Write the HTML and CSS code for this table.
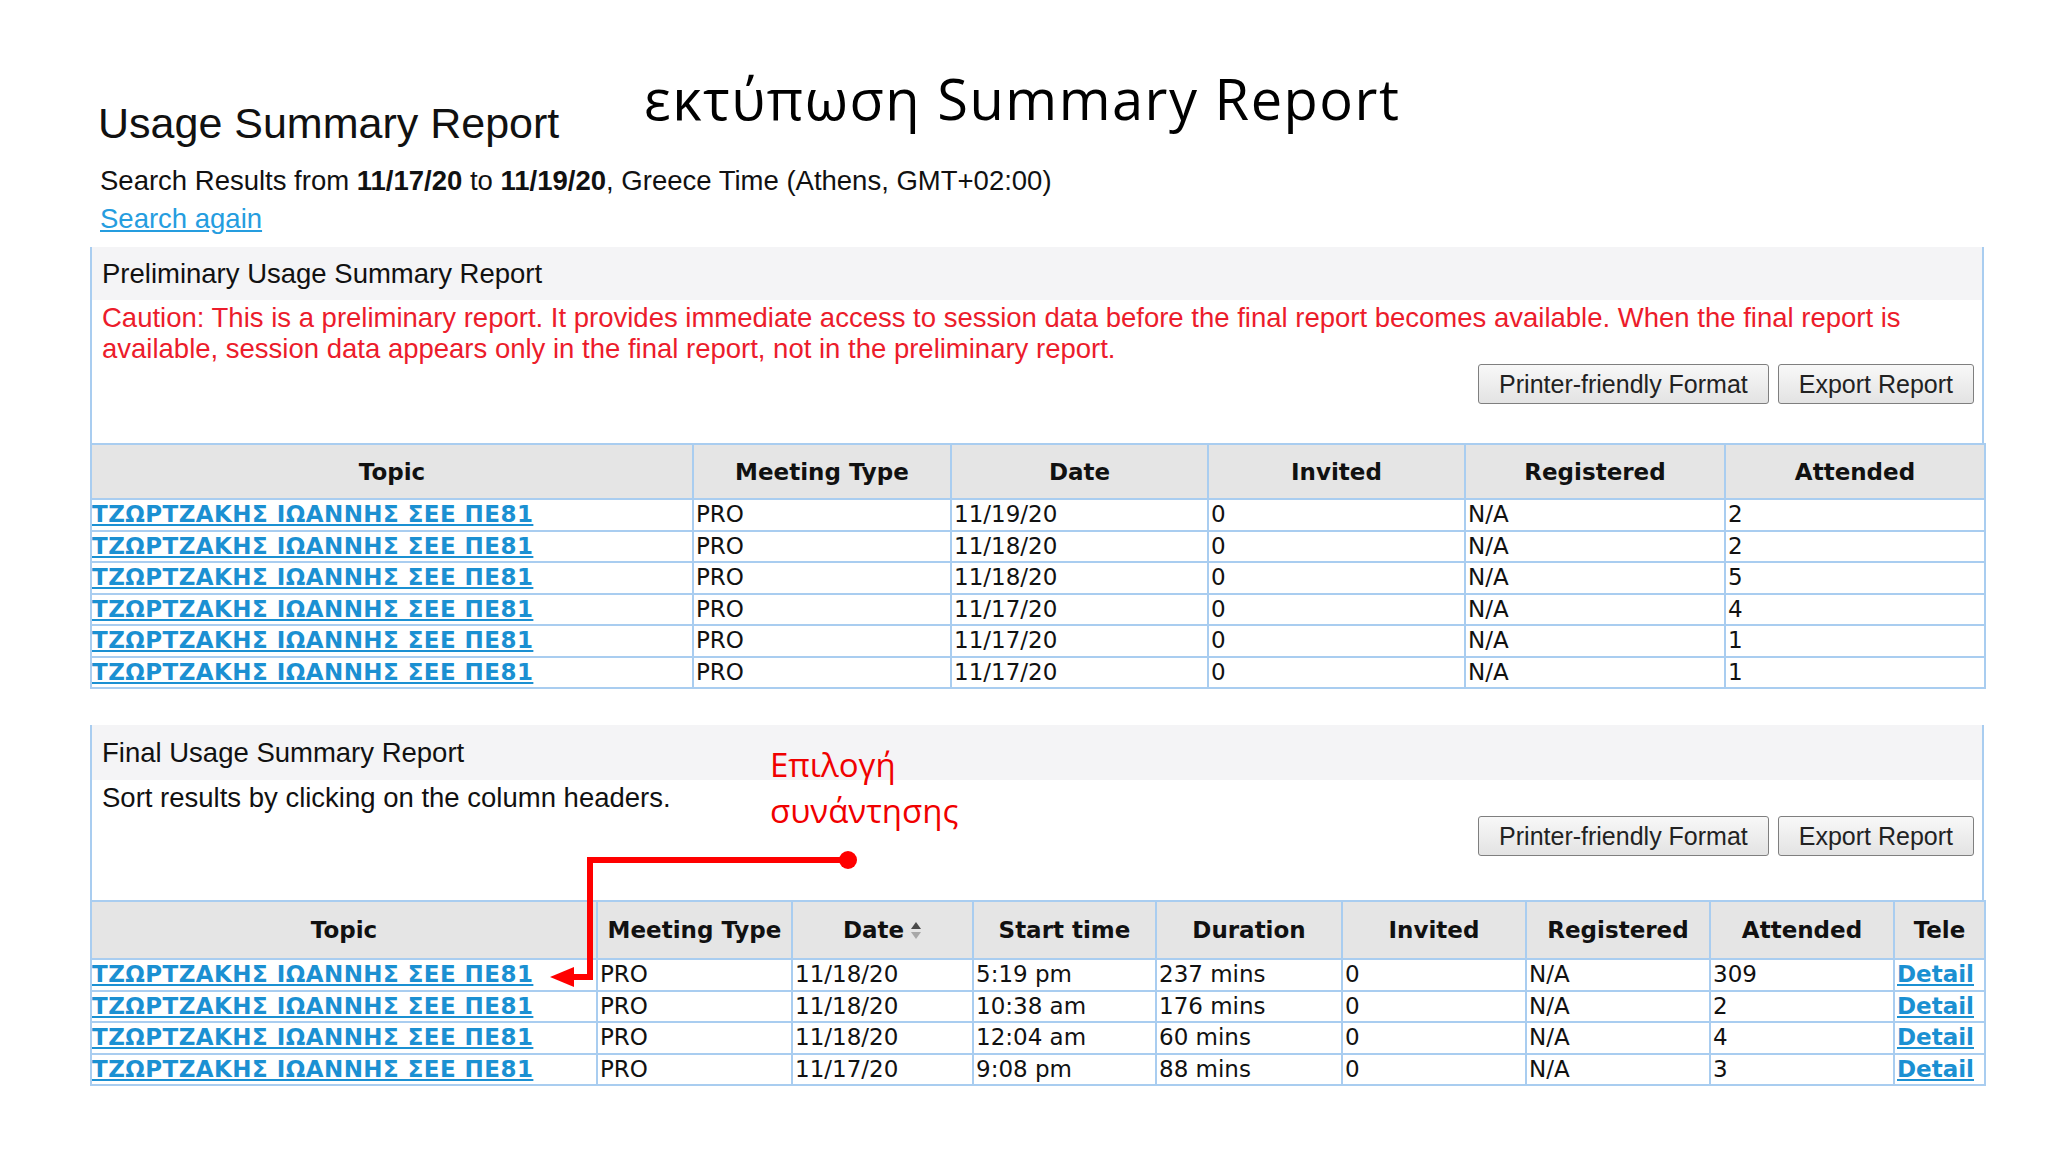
FILE: index.html
```html
<!DOCTYPE html>
<html lang="el">
<head>
<meta charset="utf-8">
<title>Usage Summary Report</title>
<link rel="stylesheet" href="styles.css">
</head>
<body>
<div class="slide">
  <h1 class="slide-title">εκτύπωση Summary Report</h1>

  <main class="report">
    <h2 class="page-title">Usage Summary Report</h2>
    <p class="range">Search Results from <b>11/17/20</b> to <b>11/19/20</b>, Greece Time (Athens, GMT+02:00)</p>
    <p class="again"><a href="#">Search again</a></p>

    <section class="panel">
      <div class="panel-box">
        <div class="panel-head">Preliminary Usage Summary Report</div>
        <div class="panel-body">
          <p class="caution">Caution: This is a preliminary report. It provides immediate access to session data before the final report becomes available. When the final report is<br>available, session data appears only in the final report, not in the preliminary report.</p>
          <div class="actions">
            <button class="btn">Printer-friendly Format</button>
            <button class="btn">Export Report</button>
          </div>
        </div>
      </div>
      <table class="grid grid-pre">
        <colgroup>
          <col class="c-topic1"><col class="c-258"><col class="c-257"><col class="c-257"><col class="c-260"><col class="c-260">
        </colgroup>
        <thead>
          <tr><th>Topic</th><th>Meeting Type</th><th>Date</th><th>Invited</th><th>Registered</th><th>Attended</th></tr>
        </thead>
        <tbody>
          <tr><td><a href="#">ΤΖΩΡΤΖΑΚΗΣ ΙΩΑΝΝΗΣ ΣΕΕ ΠΕ81</a></td><td>PRO</td><td>11/19/20</td><td>0</td><td>N/A</td><td>2</td></tr>
          <tr><td><a href="#">ΤΖΩΡΤΖΑΚΗΣ ΙΩΑΝΝΗΣ ΣΕΕ ΠΕ81</a></td><td>PRO</td><td>11/18/20</td><td>0</td><td>N/A</td><td>2</td></tr>
          <tr><td><a href="#">ΤΖΩΡΤΖΑΚΗΣ ΙΩΑΝΝΗΣ ΣΕΕ ΠΕ81</a></td><td>PRO</td><td>11/18/20</td><td>0</td><td>N/A</td><td>5</td></tr>
          <tr><td><a href="#">ΤΖΩΡΤΖΑΚΗΣ ΙΩΑΝΝΗΣ ΣΕΕ ΠΕ81</a></td><td>PRO</td><td>11/17/20</td><td>0</td><td>N/A</td><td>4</td></tr>
          <tr><td><a href="#">ΤΖΩΡΤΖΑΚΗΣ ΙΩΑΝΝΗΣ ΣΕΕ ΠΕ81</a></td><td>PRO</td><td>11/17/20</td><td>0</td><td>N/A</td><td>1</td></tr>
          <tr><td><a href="#">ΤΖΩΡΤΖΑΚΗΣ ΙΩΑΝΝΗΣ ΣΕΕ ΠΕ81</a></td><td>PRO</td><td>11/17/20</td><td>0</td><td>N/A</td><td>1</td></tr>
        </tbody>
      </table>
    </section>

    <section class="panel panel-final">
      <div class="panel-box">
        <div class="panel-head panel-head-tall">Final Usage Summary Report</div>
        <div class="panel-body panel-body-final">
          <p class="note">Sort results by clicking on the column headers.</p>
          <div class="actions actions-final">
            <button class="btn">Printer-friendly Format</button>
            <button class="btn">Export Report</button>
          </div>
        </div>
      </div>
      <table class="grid grid-final">
        <colgroup>
          <col class="c-topic2"><col class="c-195"><col class="c-181"><col class="c-183"><col class="c-186"><col class="c-184"><col class="c-184"><col class="c-184"><col class="c-tele">
        </colgroup>
        <thead>
          <tr>
            <th>Topic</th><th>Meeting Type</th>
            <th><span class="sortable">Date<svg class="sort-icon" width="12" height="19" viewBox="0 0 12 19"><path d="M6 1 L11 8 H1 Z" fill="#4a4a4a"/><path d="M1 11 H11 L6 18 Z" fill="#a8a8a8"/></svg></span></th>
            <th>Start time</th><th>Duration</th><th>Invited</th><th>Registered</th><th>Attended</th><th>Tele</th>
          </tr>
        </thead>
        <tbody>
          <tr><td><a href="#">ΤΖΩΡΤΖΑΚΗΣ ΙΩΑΝΝΗΣ ΣΕΕ ΠΕ81</a></td><td>PRO</td><td>11/18/20</td><td>5:19 pm</td><td>237 mins</td><td>0</td><td>N/A</td><td>309</td><td><a href="#">Detail</a></td></tr>
          <tr><td><a href="#">ΤΖΩΡΤΖΑΚΗΣ ΙΩΑΝΝΗΣ ΣΕΕ ΠΕ81</a></td><td>PRO</td><td>11/18/20</td><td>10:38 am</td><td>176 mins</td><td>0</td><td>N/A</td><td>2</td><td><a href="#">Detail</a></td></tr>
          <tr><td><a href="#">ΤΖΩΡΤΖΑΚΗΣ ΙΩΑΝΝΗΣ ΣΕΕ ΠΕ81</a></td><td>PRO</td><td>11/18/20</td><td>12:04 am</td><td>60 mins</td><td>0</td><td>N/A</td><td>4</td><td><a href="#">Detail</a></td></tr>
          <tr><td><a href="#">ΤΖΩΡΤΖΑΚΗΣ ΙΩΑΝΝΗΣ ΣΕΕ ΠΕ81</a></td><td>PRO</td><td>11/17/20</td><td>9:08 pm</td><td>88 mins</td><td>0</td><td>N/A</td><td>3</td><td><a href="#">Detail</a></td></tr>
        </tbody>
      </table>
    </section>
  </main>

  <div class="callout">Επιλογή<br>συνάντησης</div>
  <svg class="callout-arrow" width="2048" height="1152" viewBox="0 0 2048 1152">
    <path d="M848 860 H590 V977 H568" fill="none" stroke="#ff0000" stroke-width="6"/>
    <circle cx="848" cy="860" r="9" fill="#ff0000"/>
    <path d="M550 977 L574 967 L574 987 Z" fill="#ff0000"/>
  </svg>
</div>
</body>
</html>
```

FILE: styles.css
```css
* { box-sizing: border-box; }

body {
  margin: 0;
  background: #ffffff;
  font-family: "Liberation Sans", Arial, sans-serif;
  color: #111111;
}

.slide {
  position: relative;
  width: 2048px;
  height: 1152px;
  overflow: hidden;
  background: #ffffff;
}

.slide-title {
  position: absolute;
  left: 644px;
  top: 70px;
  margin: 0;
  font-family: "Open Sans", "Noto Sans", sans-serif;
  font-weight: 400;
  font-size: 56px;
  line-height: 56px;
  letter-spacing: 1.5px;
  color: #000000;
  white-space: nowrap;
}

.report {
  width: 1894px;
  margin-left: 90px;
  padding-top: 98px;
}

.page-title {
  margin: 0 0 0 8px;
  font-weight: 400;
  font-size: 43px;
  line-height: 50px;
  color: #111111;
}

.range {
  margin: 17px 0 0 10px;
  font-size: 27.5px;
  line-height: 32px;
}

.again {
  margin: 6px 0 0 10px;
  font-size: 27.5px;
  line-height: 32px;
}

.again a {
  color: #259ddf;
  text-decoration: underline;
}

.panel { margin-top: 12px; }
.panel-final { margin-top: 36px; }

.panel-box {
  border-left: 2px solid #a9cdf0;
  border-right: 2px solid #a9cdf0;
}

.panel-head {
  background: #f4f4f6;
  height: 53px;
  line-height: 53px;
  padding-left: 10px;
  font-size: 27.5px;
  color: #111111;
}

.panel-head-tall {
  height: 55px;
  line-height: 55px;
}

.panel-body {
  padding: 2px 8px 39px 10px;
}

.panel-body-final {
  padding-bottom: 44px;
}

.caution {
  margin: 0;
  color: #ec1c2b;
  font-size: 27.5px;
  line-height: 31px;
}

.note {
  margin: 0;
  font-size: 27.5px;
  line-height: 31px;
  color: #111111;
}

.actions {
  display: flex;
  justify-content: flex-end;
  gap: 9px;
}

.actions-final { margin-top: 3px; }

.btn {
  height: 40px;
  padding: 0 20px;
  font-family: "Liberation Sans", Arial, sans-serif;
  font-size: 25px;
  color: #222222;
  background: linear-gradient(#f8f8f8, #e3e3e3);
  border: 1px solid #7f7f7f;
  border-radius: 3px;
}

.grid {
  width: 1894px;
  border-collapse: collapse;
  table-layout: fixed;
  font-family: "DejaVu Sans", Verdana, sans-serif;
  font-size: 23px;
  color: #111111;
}

.grid th,
.grid td {
  border: 2px solid #a9cdf0;
}

.grid th {
  background: #e5e5e5;
  font-weight: 700;
  height: 55px;
  text-align: center;
  padding: 0 4px;
  white-space: nowrap;
}

.grid-final th { height: 58px; }

.grid td {
  height: 31.5px;
  padding: 0 2px;
  line-height: 27px;
  white-space: nowrap;
  overflow: hidden;
}

.grid td a {
  color: #1b90d2;
  font-weight: 700;
  text-decoration: underline;
}

.grid td:first-child a { letter-spacing: 0.45px; }

.grid td:first-child { padding-left: 0; }

.c-topic1 { width: 602px; }
.c-258 { width: 258px; }
.c-257 { width: 257px; }
.c-260 { width: 260px; }

.c-topic2 { width: 506px; }
.c-195 { width: 195px; }
.c-181 { width: 181px; }
.c-183 { width: 183px; }
.c-186 { width: 186px; }
.c-184 { width: 184px; }
.c-tele { width: 91px; }

.sortable {
  display: inline-flex;
  align-items: center;
  gap: 6px;
}

.sort-icon { display: block; }

.callout {
  position: absolute;
  left: 770px;
  top: 742px;
  font-family: "Open Sans", "Noto Sans", sans-serif;
  font-size: 33px;
  line-height: 46px;
  color: #f00000;
}

.callout-arrow {
  position: absolute;
  left: 0;
  top: 0;
  pointer-events: none;
}
```
